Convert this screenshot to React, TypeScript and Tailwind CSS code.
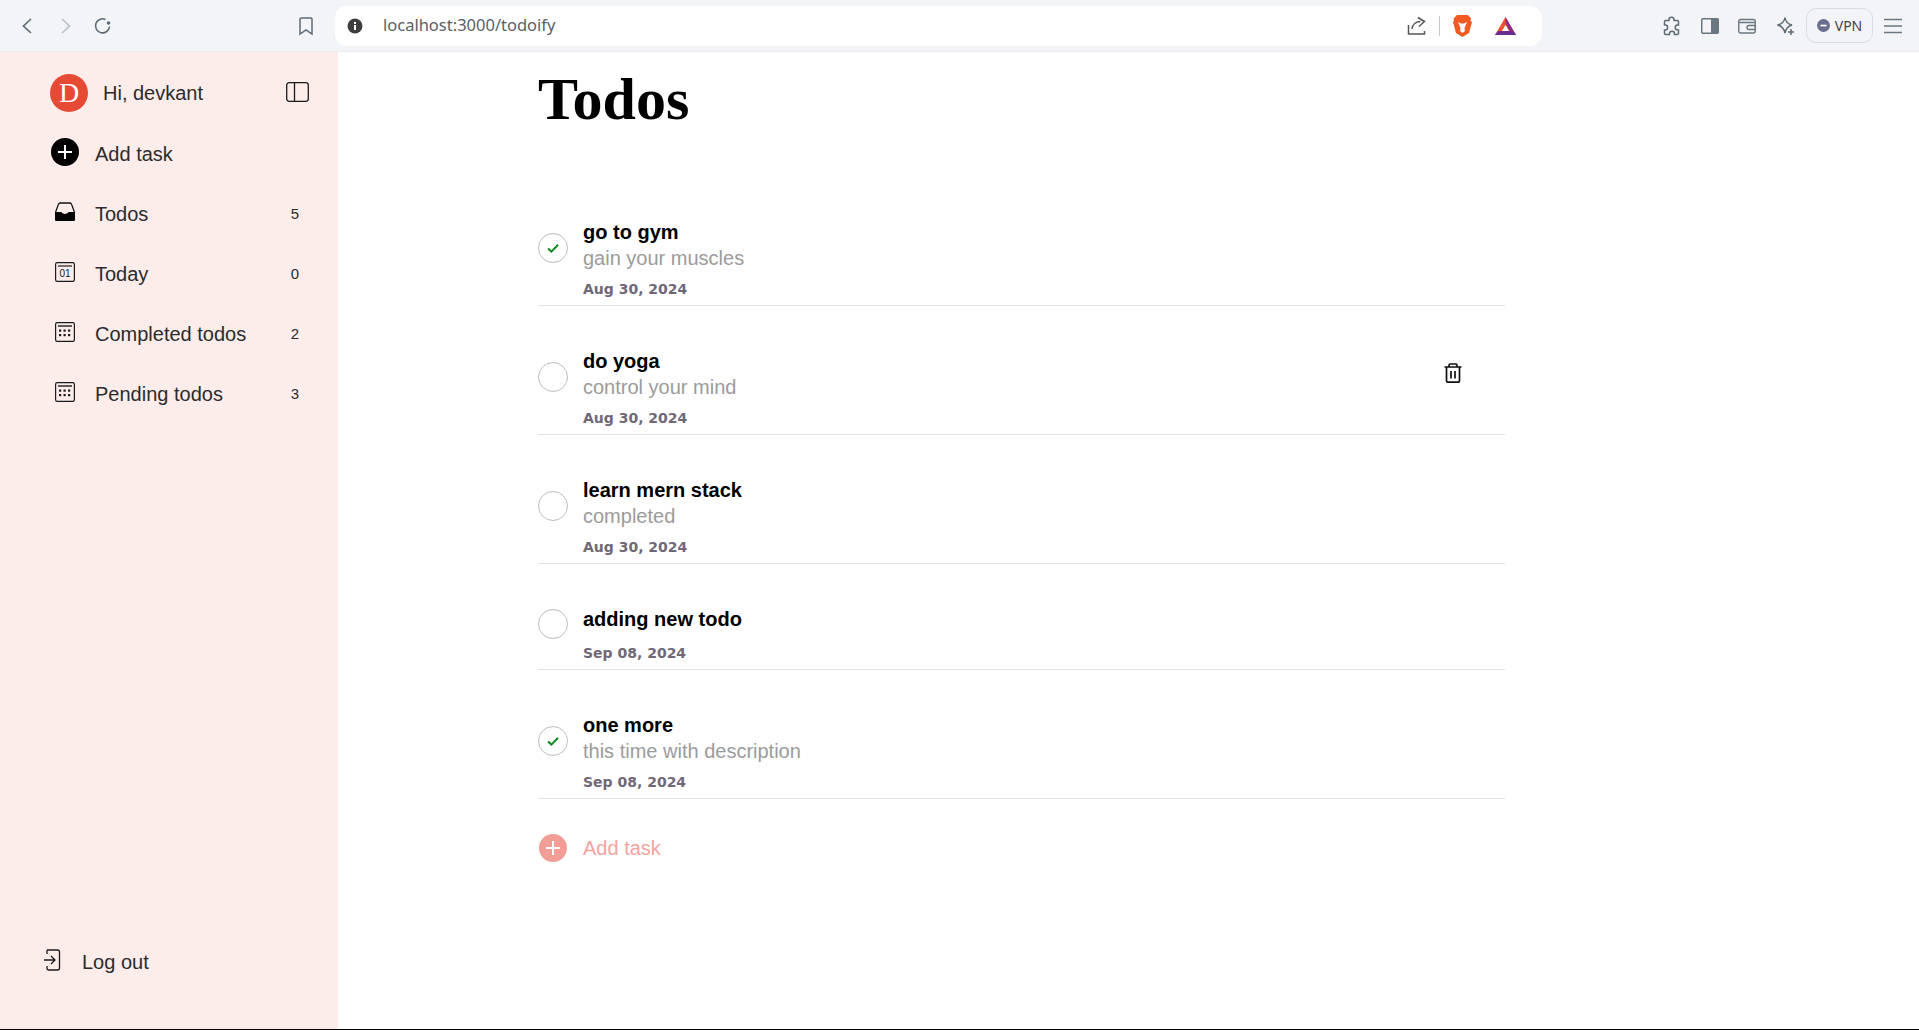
import React from "react";

const sans = "font-['Liberation_Sans',Arial,sans-serif]";

function Check({ done }: { done: boolean }) {
  return (
    <div className="w-[30px] h-[30px] rounded-full border border-[#bdbdbd] flex items-center justify-center shrink-0 mr-[15px] mb-[20px]">
      {done && (
        <svg width="14" height="14" viewBox="0 0 14 14" fill="none" stroke="#138a1f" strokeWidth="2">
          <path d="M2 7.500 5.400 10.600 12 3.800" />
        </svg>
      )}
    </div>
  );
}

type Todo = { t: string; d?: string; date: string; done?: boolean; trash?: boolean };
const todos: Todo[] = [
  { t: "go to gym", d: "gain your muscles", date: "Aug 30, 2024", done: true },
  { t: "do yoga", d: "control your mind", date: "Aug 30, 2024", trash: true },
  { t: "learn mern stack", d: "completed", date: "Aug 30, 2024" },
  { t: "adding new todo", date: "Sep 08, 2024" },
  { t: "one more", d: "this time with description", date: "Sep 08, 2024", done: true },
];

function Row({ todo, first }: { todo: Todo; first: boolean }) {
  return (
    <div className={`flex items-center border-b border-[#e3e3e3] relative pb-[8px] ${first ? "" : "mt-[42px]"}`}>
      <Check done={!!todo.done} />
      <div className="flex flex-col">
        <div className="text-[20px] leading-[26px] font-bold text-black">{todo.t}</div>
        {todo.d && <div className="text-[20px] leading-[23px] mt-[2px] mb-[-2px] text-[#9b9b9b]">{todo.d}</div>}
        <div className="font-['DejaVu_Sans',sans-serif] text-[14px] leading-[16px] font-bold text-[#6f6878] mt-[13px]">{todo.date}</div>
      </div>
      {todo.trash && (
        <svg className="absolute left-[903px] top-[13px]" width="24" height="24" viewBox="0 0 24 24" fill="none" stroke="#111" strokeWidth="1.700">
          <path d="M3.500 6h17M8 6V4.200C8 3.500 8.500 3 9.200 3h5.600c.7 0 1.200.5 1.200 1.200V6M5.500 6v13.500c0 1 .7 1.700 1.700 1.700h9.600c1 0 1.700-.7 1.700-1.700V6M10 10v7.500M14 10v7.500" />
        </svg>
      )}
    </div>
  );
}

function Side({ icon, label, count }: { icon: React.ReactNode; label: string; count: string }) {
  return (
    <div className="flex items-center h-[60px]">
      <div className="w-[45px] pl-[5px] mb-[4px] flex shrink-0">{icon}</div>
      <div className="flex-1 text-[20px] text-[#2b2b2b]">{label}</div>
      <div className="text-[15px] text-[#2b2b2b] pr-[1px]">{count}</div>
    </div>
  );
}

const CalGrid = () => (
  <svg width="20" height="20" viewBox="0 0 20 20" fill="none" stroke="#1a1a1a" strokeWidth="1.200">
    <rect x=".6" y=".6" width="18.800" height="18.800" rx="1.600" />
    <path d="M3 4h14" strokeWidth="1.400" />
    <g fill="#1a1a1a" stroke="none">
      {[4, 8.5, 13].map((x) => [7.5, 12].map((y) => <rect key={`${x}-${y}`} x={x} y={y} width="2.200" height="2.200" />))}
    </g>
  </svg>
);

const Cal01 = () => (
  <svg width="20" height="20" viewBox="0 0 20 20" fill="none" stroke="#1a1a1a" strokeWidth="1.200">
    <rect x=".6" y=".6" width="18.800" height="18.800" rx="1.600" />
    <path d="M3 4h14" strokeWidth="1.200" />
    <text x="10" y="15" textAnchor="middle" fontSize="10" fill="#1a1a1a" stroke="none" fontFamily="Liberation Sans">01</text>
  </svg>
);

const Inbox = () => (
  <svg width="20" height="20" viewBox="0 0 20 20" fill="none">
    <path d="M.6 10 3.400 2.400C3.700 1.300 4.400 1 5.200 1h9.600c.8 0 1.500.3 1.800 1.400L19.400 10" stroke="#111" strokeWidth="1.300" />
    <path d="M0 10h6c.8 0 1.200 1.900 4 1.900S13.200 10 14 10h6v7.500c0 1-.6 1.500-1.500 1.500h-17C.6 19 0 18.500 0 17.500z" fill="#050505" />
  </svg>
);

export default function App() {
  return (
    <div className={`h-[1030px] w-full flex flex-col bg-white ${sans} overflow-hidden border-b border-black`}>
      {/* browser chrome */}
      <header className="h-[52px] shrink-0 bg-[#f2f4f7] border-b border-[#e9ebef] flex items-center relative">
        <div className="flex items-center w-[335px] pl-[19px] shrink-0">
          <svg width="18" height="20" viewBox="0 0 18 20" fill="none" stroke="#5f6b75" strokeWidth="1.700" className="mr-[19px]"><path d="M12 3 4.500 10 12 17" /></svg>
          <svg width="18" height="20" viewBox="0 0 18 20" fill="none" stroke="#b9c1c8" strokeWidth="1.700" className="mr-[19px]"><path d="M6 3 13.500 10 6 17" /></svg>
          <svg width="20" height="20" viewBox="0 0 20 20" fill="none" stroke="#5f6b75" strokeWidth="1.600"><path d="M16.500 10.500A7 7 0 1 1 12.500 3.500" /><circle cx="15.500" cy="7" r="1.800" fill="#5f6b75" stroke="none" /></svg>
          <svg width="16" height="20" viewBox="0 0 16 20" fill="none" stroke="#5f6b75" strokeWidth="1.500" className="ml-[185px]"><path d="M2 3c0-.6.400-1 1-1h10c.600 0 1 .4 1 1v15l-6-4-6 4z" /></svg>
        </div>
        <div className="w-[1207px] h-[40px] bg-white rounded-[12px] flex items-center shrink-0 relative">
          <svg width="16" height="16" viewBox="0 0 16 16" className="ml-[12px]"><circle cx="8" cy="8" r="7.500" fill="#3f3f3f" /><rect x="7" y="7" width="2" height="5" fill="#fff" /><rect x="7" y="4" width="2" height="2" fill="#fff" /></svg>
          <span className="ml-[20px] text-[#5a5f66] text-[16.500px] font-['Noto_Sans',sans-serif]">localhost:3000/todoify</span>
          <div className="ml-auto flex items-center pr-[25px]">
            <svg width="20" height="20" viewBox="0 0 20 20" fill="none" stroke="#555" strokeWidth="1.500" className="mr-[1px]"><path d="M1.500 9v9h16v-3M5 13c.5-4.500 4-7.500 8.500-7.500M10.800 1.500l6.700 4-5.500 5" /></svg>
            <div className="w-[1px] h-[20px] bg-[#c8c8c8] ml-[11px] mr-[12px]" />
            <svg width="21" height="24" viewBox="0 0 21 24" className="mr-[21px]"><path d="M5 1h11l3 3.500-.5 2 1.500 1.500-3 11-6.500 4-6.500-4-3-11L2 6.500l-.5-2z" fill="#f15a22" /><path d="M6 8l3 1.500h3L15 8l-2.500 6 .5 3-2.500 2-2.500-2 .5-3z" fill="#fff" /></svg>
            <svg width="23" height="20" viewBox="0 0 23 20"><path d="M11.500 1 22 19H1z" fill="#f0502a" /><path d="M11.500 1 22 19h-4L11.500 7z" fill="#8d2a8a" /><path d="M1 19l3-4h15l3 4z" fill="#6a2c91" /><path d="M11.500 9 15 15H8z" fill="#fff" /></svg>
          </div>
        </div>
        <div className="flex items-center ml-[120px]">
          <svg width="20" height="20" viewBox="0 0 20 20" fill="none" stroke="#5f6b75" strokeWidth="1.500" className="mr-[19px]"><path d="M7 3.500c0-3 5-3 5 0v1h3.500c.5 0 1 .5 1 1V9h-1c-3 0-3 5 0 5h1v3.500c0 .5-.5 1-1 1h-3v-1c0-3-5-3-5 0v1H3.500c-.5 0-1-.5-1-1V14h1c2.800 0 2.800-5 0-5h-1V5.500c0-.5.500-1 1-1H7z" /></svg>
          <svg width="18" height="16" viewBox="0 0 18 16" className="mr-[19px]"><rect x=".75" y=".75" width="16.500" height="14.500" rx="1" fill="none" stroke="#6b7780" strokeWidth="1.500" /><rect x="10" y="1" width="7.500" height="14" fill="#6b7780" /></svg>
          <svg width="18" height="16" viewBox="0 0 18 16" fill="none" stroke="#6b7780" strokeWidth="1.400" className="mr-[20px]"><rect x=".75" y="1.500" width="16.500" height="13.500" rx="2" /><path d="M1 4.500h16M11 7.500h6.500v4H11a2 2 0 0 1 0-4z" /></svg>
          <svg width="20" height="20" viewBox="0 0 20 20" fill="none" stroke="#5f6b75" strokeWidth="1.500" className="mr-[10px]"><path d="M9 1.500c.5 4 2.500 6.500 7 7.500-4 1-6 3-7 8-1-4.500-3-7-7.500-8C6 8 8.500 5.500 9 1.500z" /><path d="M15 13v6M12 16h6" /></svg>
          <div className="w-[67px] h-[35px] rounded-[10px] border border-[#d9dde3] flex items-center justify-center gap-[5px] text-[14px] text-[#444] font-['Noto_Sans',sans-serif]">
            <svg width="13" height="13" viewBox="0 0 13 13"><circle cx="6.500" cy="6.500" r="6.500" fill="#6b6f8f" /><rect x="3.500" y="5.700" width="6" height="1.700" fill="#fff" /></svg>
            VPN
          </div>
          <svg width="20" height="16" viewBox="0 0 20 16" stroke="#6b7780" strokeWidth="1.500" className="ml-[10px]"><path d="M1 1.500h18M1 8h18M1 14.500h18" /></svg>
        </div>
      </header>

      <div className="flex flex-1 min-h-0">
        {/* sidebar */}
        <aside className="w-[338px] shrink-0 bg-[#fcedeb] flex flex-col pl-[50px] pr-[38px] pt-[22px] pb-[52px]">
          <div className="flex items-center h-[38px]">
            <div className="w-[38px] h-[38px] rounded-full bg-[#e64a35] text-white font-['Liberation_Serif',serif] text-[28px] flex items-center justify-center">D</div>
            <div className="ml-[15px] flex-1 text-[20px] text-[#2b2b2b]">Hi, devkant</div>
            <svg width="24" height="20" viewBox="0 0 24 20" fill="none" stroke="#1a1a1a" strokeWidth="1.300" className="mr-[-10px] mb-[2px]"><rect x=".7" y=".7" width="21.600" height="18.600" rx="2.500" /><path d="M8.500 1v18" /></svg>
          </div>
          <div className="flex items-center h-[60px] mt-[12px]">
            <div className="w-[45px] pl-[1px] mb-[4px] flex shrink-0">
              <svg width="28" height="28" viewBox="0 0 28 28"><circle cx="14" cy="14" r="14" fill="#000" /><path d="M14 7v14M7 14h14" stroke="#fff" strokeWidth="2" /></svg>
            </div>
            <div className="text-[20px] text-[#2b2b2b]">Add task</div>
          </div>
          <Side icon={<Inbox />} label="Todos" count="5" />
          <Side icon={<Cal01 />} label="Today" count="0" />
          <Side icon={<CalGrid />} label="Completed todos" count="2" />
          <Side icon={<CalGrid />} label="Pending todos" count="3" />
          <div className="mt-auto flex items-center ml-[-7px]">
            <svg width="20" height="22" viewBox="0 0 20 22" fill="none" stroke="#1a1a1a" strokeWidth="1.300" className="mb-[4px]"><path d="M4 1h10.500c1 0 2 .8 2 2v16c0 1.200-1 2-2 2H6c-1 0-2-.8-2-2v-2M4 5V1M1 11h10.500M8 7l4 4-4 4" /></svg>
            <div className="ml-[19px] text-[20px] text-[#2b2b2b]">Log out</div>
          </div>
        </aside>

        {/* main */}
        <main className="flex-1 pl-[200px]">
          <div className="w-[967px]">
            <h1 className="font-['Liberation_Serif',serif] font-bold text-[60px] leading-[66px] text-black mt-[14px] mb-[87px]">Todos</h1>
            {todos.map((t, i) => (
              <Row key={t.t} todo={t} first={i === 0} />
            ))}
            <div className="flex items-center mt-[34px]">
              <div className="w-[30px] flex justify-center mr-[15px]">
                <svg width="28" height="28" viewBox="0 0 28 28"><circle cx="14" cy="14" r="14" fill="#f39d97" /><path d="M14 7v14M7 14h14" stroke="#fff" strokeWidth="2" /></svg>
              </div>
              <div className="text-[20px] text-[#f5a3a0]">Add task</div>
            </div>
          </div>
        </main>
      </div>
    </div>
  );
}
